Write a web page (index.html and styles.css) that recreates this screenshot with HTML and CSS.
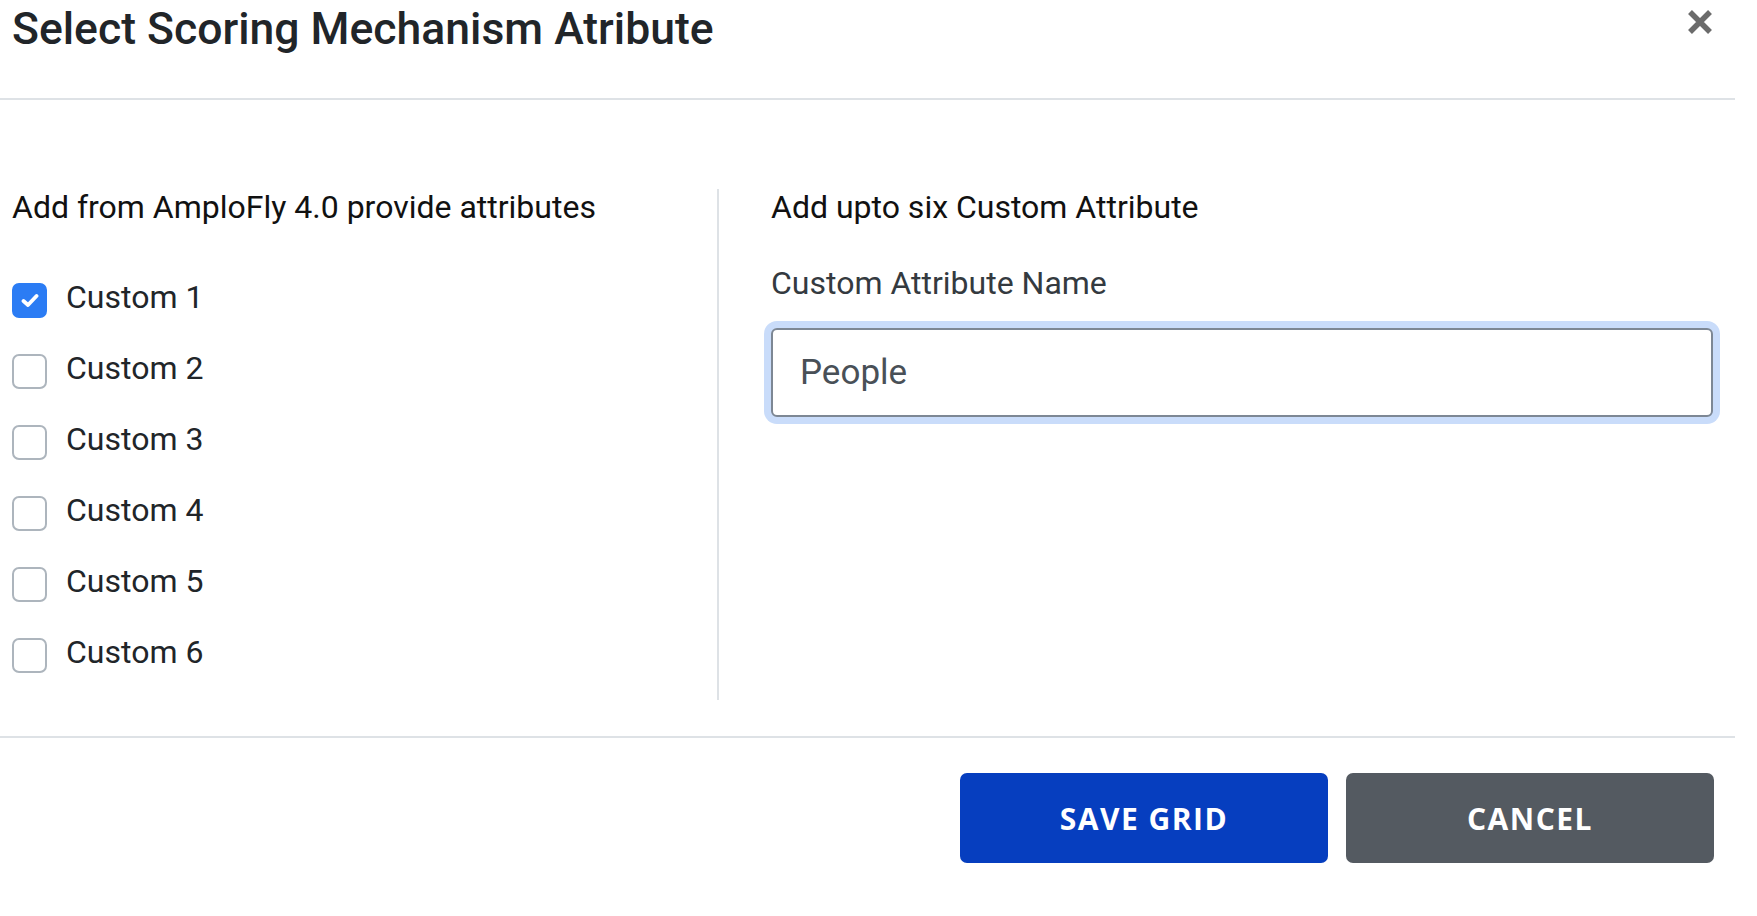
FILE: index.html
```html
<!DOCTYPE html>
<html lang="en">
<head>
<meta charset="utf-8">
<title>Select Scoring Mechanism Atribute</title>
<link rel="stylesheet" href="styles.css">
</head>
<body>
<div class="modal">
  <div class="modal-header">
    <h1 class="modal-title">Select Scoring Mechanism Atribute</h1>
    <button class="close" aria-label="Close">
      <svg width="26" height="26" viewBox="0 0 26 26"><path d="M3 3 L23 23 M23 3 L3 23" stroke="#6b6b6b" stroke-width="5.5" stroke-linecap="butt"/></svg>
    </button>
  </div>
  <div class="modal-body">
    <div class="col col-left">
      <div class="section-title">Add from AmploFly 4.0 provide attributes</div>
      <ul class="checks">
        <li class="check-row"><span class="box checked"><svg width="18" height="15" viewBox="0 0 18 15"><path d="M2.5 8 L7 12 L15.5 3" fill="none" stroke="#fff" stroke-width="3.8" stroke-linecap="round" stroke-linejoin="round"/></svg></span><span class="check-label">Custom 1</span></li>
        <li class="check-row"><span class="box"></span><span class="check-label">Custom 2</span></li>
        <li class="check-row"><span class="box"></span><span class="check-label">Custom 3</span></li>
        <li class="check-row"><span class="box"></span><span class="check-label">Custom 4</span></li>
        <li class="check-row"><span class="box"></span><span class="check-label">Custom 5</span></li>
        <li class="check-row"><span class="box"></span><span class="check-label">Custom 6</span></li>
      </ul>
    </div>
    <div class="col col-right">
      <div class="section-title">Add upto six Custom Attribute</div>
      <label class="field-label" for="attr">Custom Attribute Name</label>
      <input id="attr" class="field-input" type="text" value="People">
    </div>
  </div>
  <div class="modal-footer">
    <button class="btn btn-save">SAVE GRID</button>
    <button class="btn btn-cancel">CANCEL</button>
  </div>
</div>
</body>
</html>
```
FILE: styles.css
```css
* { box-sizing: border-box; }
html, body { margin: 0; padding: 0; background: #fff; }
body { font-family: Roboto, "Liberation Sans", Arial, sans-serif; color: #212529; }

.modal { width: 1735px; }

.modal-header {
  height: 100px;
  border-bottom: 2px solid #dee2e6;
  display: flex;
  justify-content: space-between;
  align-items: flex-start;
  padding: 0 22px 0 12px;
}
.modal-title {
  margin: 0;
  padding-top: 3px;
  font-size: 44.5px;
  line-height: 52px;
  font-weight: 500;
  color: #212529;
}
.close {
  margin-top: 9px;
  padding: 0;
  border: 0;
  background: transparent;
  width: 26px;
  height: 26px;
  display: flex;
}

.modal-body {
  display: flex;
  padding: 89px 0 36px 0;
}
.col-left {
  width: 719px;
  padding-left: 12px;
  border-right: 2px solid #dee2e6;
  padding-bottom: 27px;
}
.col-right {
  flex: 1;
  padding-left: 52px;
  padding-right: 20px;
  display: flex;
  flex-direction: column;
}
.section-title {
  font-size: 32px;
  line-height: 36px;
  color: #111;
}

.checks { list-style: none; margin: 58px 0 0 0; padding: 0; display: flex; flex-direction: column; gap: 36px; }
.check-row { display: flex; align-items: flex-start; gap: 19px; height: 35px; }
.box {
  width: 35px; height: 35px;
  border: 2px solid #adb5bd;
  border-radius: 7px;
  background: #fff;
  display: flex; align-items: center; justify-content: center;
  flex: none;
}
.box.checked { background: #2b7cf4; border-color: #2b7cf4; }
.check-label { font-size: 32px; line-height: 28px; color: #212529; }

.field-label {
  margin-top: 40px;
  font-size: 32px;
  line-height: 36px;
  color: #343a40;
}
.field-input {
  margin-top: 27px;
  width: 942px;
  height: 89px;
  border: 2px solid #7d8794;
  border-radius: 6px;
  box-shadow: 0 0 0 7px #c9dcfa;
  padding: 0 0 0 27px;
  font-family: Roboto, "Liberation Sans", Arial, sans-serif;
  font-size: 35px;
  color: #495057;
  outline: none;
}

.modal-footer {
  border-top: 2px solid #dee2e6;
  padding: 35px 21px 0 0;
  display: flex;
  justify-content: flex-end;
  gap: 18px;
}
.btn {
  width: 368px;
  height: 90px;
  border: 0;
  border-radius: 7px;
  color: #fff;
  font-family: "Open Sans", "DejaVu Sans", sans-serif;
  font-weight: 700;
  font-size: 30px;
  letter-spacing: 1.5px;
}
.btn-save { background: #063ebf; }
.btn-cancel { background: #545a61; }
```
